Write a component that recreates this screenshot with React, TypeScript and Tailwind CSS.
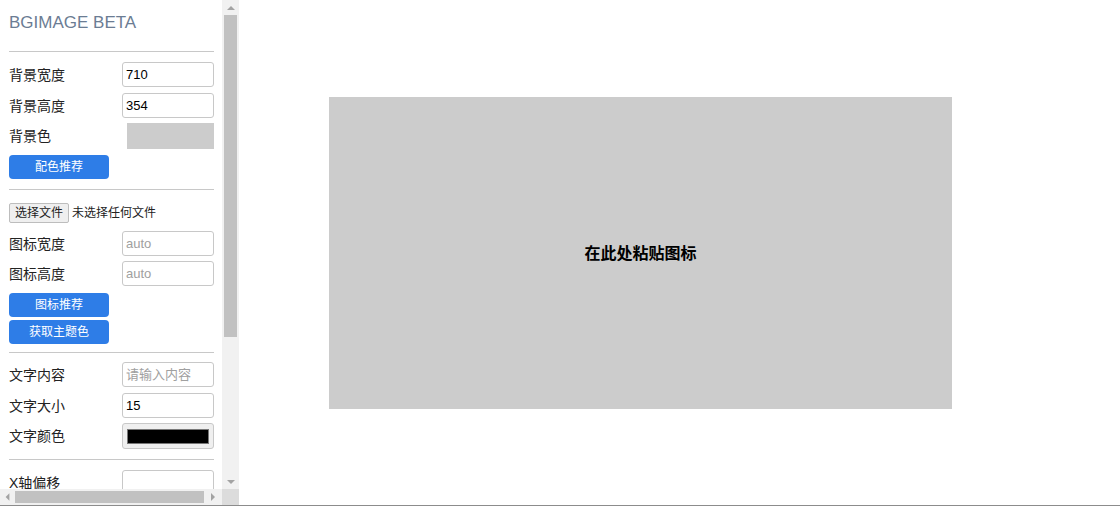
const font = { fontFamily: '"Liberation Sans", "Noto Sans CJK SC", sans-serif' };

function Field({ label, value, placeholder }: { label: string; value?: string; placeholder?: string }) {
  return (
    <div className="flex w-[205px] items-center justify-between">
      <span className="text-[14px] leading-[20px] text-[#222]">{label}</span>
      <input
        readOnly
        value={value ?? ''}
        placeholder={placeholder}
        className="h-[25px] w-[92px] rounded-[3px] border border-[#c8c8c8] bg-white pl-[3px] text-[13px] text-black outline-none placeholder:text-[#a0a0a0]"
      />
    </div>
  );
}

function BlueButton({ children }: { children: string }) {
  return (
    <button className="block h-[24px] w-[100px] rounded-[4px] bg-[#2e7de7] text-[12px] leading-[24px] text-white">
      {children}
    </button>
  );
}

function Divider() {
  return <div className="h-px w-[205px] bg-[#c8c8c8]" />;
}

function Arrow({ dir }: { dir: 'up' | 'down' | 'left' | 'right' }) {
  const pts = {
    up: '4,10 12,10 8,6',
    down: '4,6 12,6 8,10',
    left: '10,4 10,12 6,8',
    right: '6,4 6,12 10,8',
  }[dir];
  return (
    <svg width="16" height="16" viewBox="0 0 16 16">
      <polygon points={pts} fill="#a3a3a3" />
    </svg>
  );
}

export default function App() {
  return (
    <div style={font} className="flex h-[506px] w-[1120px] overflow-hidden border-b border-[#8c8c8c] bg-white">
      <aside className="flex h-full w-[239px] flex-col">
        <div className="flex min-h-0 flex-1">
          <div className="flex flex-1 flex-col overflow-hidden pl-[9px]">
            <div className="flex h-[44px] shrink-0 items-center pt-[1px] text-[17px] text-[#6b7c93]">BGIMAGE BETA</div>
            <div className="mt-[7px]"><Divider /></div>

            <div className="mt-[10px]"><Field label="背景宽度" value="710" /></div>
            <div className="mt-[6px]"><Field label="背景高度" value="354" /></div>
            <div className="mt-[5px] flex w-[205px] items-center justify-between">
              <span className="text-[14px] leading-[20px] text-[#222]">背景色</span>
              <div className="h-[26px] w-[87px] bg-[#cccccc]" />
            </div>
            <div className="mt-[6px]"><BlueButton>配色推荐</BlueButton></div>
            <div className="mt-[10px]"><Divider /></div>

            <div className="mt-[13px] flex items-center">
              <span className="flex h-[20px] w-[60px] items-center justify-center rounded-[2px] border border-[#bdbdbd] bg-[#efefef] text-[12px] text-[#222]">
                选择文件
              </span>
              <span className="ml-[3px] text-[12px] text-[#222]">未选择任何文件</span>
            </div>
            <div className="mt-[8px]"><Field label="图标宽度" placeholder="auto" /></div>
            <div className="mt-[5px]"><Field label="图标高度" placeholder="auto" /></div>
            <div className="mt-[7px]"><BlueButton>图标推荐</BlueButton></div>
            <div className="mt-[3px]"><BlueButton>获取主题色</BlueButton></div>
            <div className="mt-[8px]"><Divider /></div>

            <div className="mt-[9px]"><Field label="文字内容" placeholder="请输入内容" /></div>
            <div className="mt-[6px]"><Field label="文字大小" value="15" /></div>
            <div className="mt-[5px] flex w-[205px] items-center justify-between">
              <span className="text-[14px] leading-[20px] text-[#222]">文字颜色</span>
              <div className="flex h-[26px] w-[92px] items-center justify-center rounded-[3px] border border-[#c8c8c8] bg-[#efefef]">
                <div className="h-[15px] w-[82px] border border-[#777] bg-black" />
              </div>
            </div>
            <div className="mt-[10px]"><Divider /></div>

            <div className="mt-[10px] shrink-0"><Field label="X轴偏移" /></div>
          </div>

          <div className="flex w-[17px] flex-col bg-[#f1f1f1]">
            <div className="flex h-[15px] items-center justify-center"><Arrow dir="up" /></div>
            <div className="mx-[2px] h-[322px] bg-[#c1c1c1]" />
            <div className="flex-1" />
            <div className="flex h-[15px] items-center justify-center"><Arrow dir="down" /></div>
          </div>
        </div>

        <div className="flex h-[16px]">
          <div className="flex w-[222px] items-center bg-[#f1f1f1]">
            <div className="flex w-[15px] justify-center"><Arrow dir="left" /></div>
            <div className="h-[12px] w-[189px] bg-[#c1c1c1]" />
            <div className="flex flex-1 justify-center"><Arrow dir="right" /></div>
          </div>
          <div className="flex-1 bg-[#dcdcdc]" />
        </div>
      </aside>

      <main className="flex flex-1 items-center">
        <div className="ml-[90px] flex h-[312px] w-[623px] items-center justify-center bg-[#cccccc] pt-[3px]">
          <span className="text-[16px] font-bold text-black">在此处粘贴图标</span>
        </div>
      </main>
    </div>
  );
}
